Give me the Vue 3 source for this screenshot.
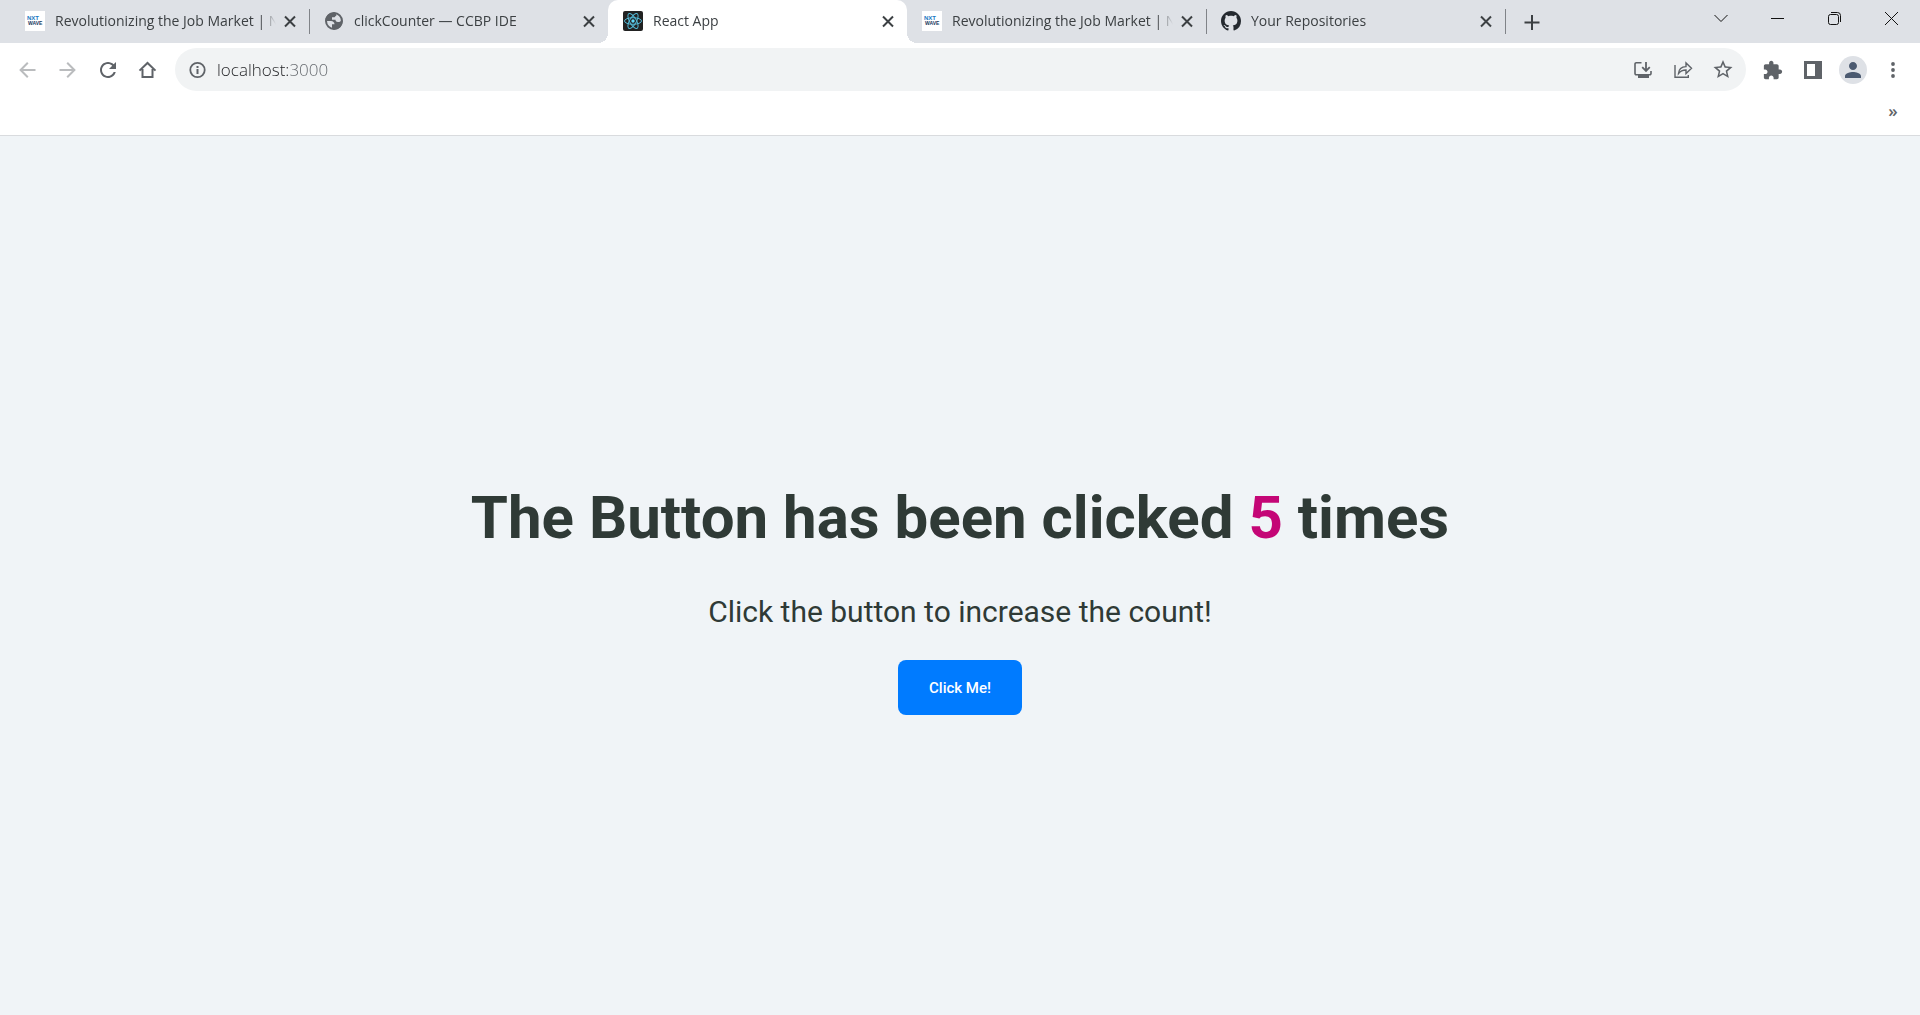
<script setup>
import { ref } from 'vue'

const tabs = [
  { id: 1, title: 'Revolutionizing the Job Market | N', icon: 'nxt' },
  { id: 2, title: 'clickCounter — CCBP IDE', icon: 'globe' },
  { id: 3, title: 'React App', icon: 'react', active: true },
  { id: 4, title: 'Revolutionizing the Job Market | N', icon: 'nxt' },
  { id: 5, title: 'Your Repositories', icon: 'github' }
]

const address = ref('localhost:3000')
const count = ref(5)
</script>

<template>
  <div class="browser">
    <header class="chrome">
      <div class="strip">
        <div v-for="tab in tabs" :key="tab.id" class="tab" :class="{ active: tab.active }">
          <svg v-if="tab.icon === 'nxt'" class="favicon" viewBox="0 0 20 20">
            <rect width="20" height="20" fill="#fff" />
            <text class="nxt" x="2" y="9" fill="#1a78c2">NXT</text>
            <text class="wave" x="3" y="14" fill="#17375e">WAVE</text>
          </svg>
          <svg v-else-if="tab.icon === 'globe'" class="favicon" viewBox="0 0 20 20">
            <circle cx="10" cy="10" r="8" fill="#dee1e6" stroke="#5f6368" stroke-width="2" />
            <path fill="#5f6368" d="M10 1.5C5 1.500 1.500 5 1.500 10h5.500c2 0 3.500 1.500 3.500 3.200H8v3.500l2 1.800c5 0 8.500-3.500 8.500-8.500l-1.500-.8c-.5 1.500-1.500 1.800-3 1.800-2 0-2.500-1.200-2.500-2.200H8V6.200h2.500c.5 0 .8-1.200 1.800-1.500V2z" />
          </svg>
          <svg v-else-if="tab.icon === 'react'" class="favicon" viewBox="0 0 20 20">
            <rect width="20" height="20" rx="2" fill="#222" />
            <g fill="none" stroke="#53b9d6" stroke-width="1">
              <ellipse cx="10" cy="10" rx="8.500" ry="3.300" />
              <ellipse cx="10" cy="10" rx="8.500" ry="3.300" transform="rotate(60 10 10)" />
              <ellipse cx="10" cy="10" rx="8.500" ry="3.300" transform="rotate(120 10 10)" />
            </g>
            <circle cx="10" cy="10" r="1.700" fill="#61dafb" />
          </svg>
          <svg v-else class="favicon" viewBox="0 0 16 16">
            <path fill="#24292f" d="M8 0C3.58 0 0 3.58 0 8c0 3.54 2.29 6.53 5.47 7.59.4.07.55-.17.55-.38 0-.19-.01-.82-.01-1.49-2.01.37-2.53-.49-2.69-.94-.09-.23-.48-.94-.82-1.13-.28-.15-.68-.52-.01-.53.63-.01 1.08.58 1.23.82.72 1.21 1.87.87 2.33.66.07-.52.28-.87.51-1.07-1.78-.2-3.64-.89-3.64-3.95 0-.87.31-1.59.82-2.15-.08-.2-.36-1.02.08-2.12 0 0 .67-.21 2.2.82.64-.18 1.32-.27 2-.27s1.36.09 2 .27c1.53-1.04 2.2-.82 2.2-.82.44 1.1.16 1.92.08 2.12.51.56.82 1.27.82 2.15 0 3.07-1.87 3.75-3.65 3.95.29.25.54.73.54 1.48 0 1.07-.01 1.93-.01 2.2 0 .21.15.46.55.38A8.01 8.01 0 0 0 16 8c0-4.42-3.58-8-8-8z" />
          </svg>
          <span class="title">{{ tab.title }}</span>
          <button class="close" aria-label="Close tab">
            <svg viewBox="0 0 20 20"><path d="M5 5.500l10 10M15 5.500l-10 10" stroke="#3c4043" stroke-width="2" /></svg>
          </button>
        </div>
        <button class="new-tab" aria-label="New tab">
          <svg viewBox="0 0 20 20"><path d="M10 3v15M2.500 10.500h15" stroke="#3c4043" stroke-width="2" /></svg>
        </button>
        <div class="window-controls">
          <button aria-label="Search tabs"><svg viewBox="0 0 20 20"><path d="M3.500 7l6.500 6.500L16.500 7" /></svg></button>
          <button aria-label="Minimize"><svg viewBox="0 0 20 20"><path d="M3 10.500h13" /></svg></button>
          <button aria-label="Restore">
            <svg viewBox="0 0 20 20">
              <rect x="3.500" y="6.500" width="10" height="10" rx="2" />
              <path d="M6 4.500h6.500a3 3 0 0 1 3 3V14" />
            </svg>
          </button>
          <button aria-label="Close"><svg viewBox="0 0 20 20"><path d="M3 4l13 13M16 4L3 17" /></svg></button>
        </div>
      </div>

      <nav class="toolbar">
        <button class="tool" aria-label="Back">
          <svg viewBox="0 0 20 20" class="faded"><path d="M17.500 10H3M9.800 2.800L2.600 10l7.200 7.200" /></svg>
        </button>
        <button class="tool" aria-label="Forward">
          <svg viewBox="0 0 20 20" class="faded"><path d="M1.500 10H16M9.200 2.800l7.200 7.200-7.200 7.200" /></svg>
        </button>
        <button class="tool" aria-label="Reload">
          <svg class="large" viewBox="0 0 24 24"><path fill="#5f6368" d="M17.65 6.35C16.2 4.9 14.21 4 12 4c-4.42 0-7.99 3.58-7.99 8s3.57 8 7.99 8c3.73 0 6.84-2.550 7.73-6h-2.080c-.82 2.330-3.040 4-5.650 4-3.310 0-6-2.690-6-6s2.690-6 6-6c1.660 0 3.140.690 4.220 1.780L13 11h7V4l-2.350 2.350z" /></svg>
        </button>
        <button class="tool" aria-label="Home">
          <svg class="large" viewBox="0 0 24 24"><path d="M3.500 12.600L11.500 5l8 7.600M6.500 11v8h10v-8" fill="none" stroke="#5f6368" stroke-width="2" /></svg>
        </button>

        <div class="omnibox">
          <svg class="info" viewBox="0 0 20 20">
            <circle cx="10.500" cy="10" r="7.200" fill="none" stroke="#5f6368" stroke-width="1.800" />
            <path d="M10.500 9v5M10.500 6v2" stroke="#5f6368" stroke-width="2" />
          </svg>
          <input v-model="address" class="address" type="text" aria-label="Address" spellcheck="false" />
          <button class="tool" aria-label="Install app">
            <svg viewBox="0 0 20 20" fill="none" stroke="#5f6368" stroke-width="1.600">
              <path d="M8.500 2.800H3.200a1.200 1.200 0 0 0-1.200 1.200v9.500a1.200 1.200 0 0 0 1.200 1.200h13.600a1.200 1.200 0 0 0 1.200-1.200V11" />
              <path d="M13 2v8.500M9.200 7.200L13 11l3.800-3.800" stroke-width="1.800" />
              <path d="M5 16.500h11" stroke-width="3" />
            </svg>
          </button>
          <button class="tool" aria-label="Share">
            <svg viewBox="0 0 20 20" fill="none" stroke="#5f6368" stroke-width="1.400">
              <path d="M2 5v12.300h13.300V15" />
              <path d="M5.500 13.500c.3-4 3-6.700 7.500-6.900V3l5.500 5.300-5.500 5.200V10c-3.500 0-5.500.8-7.500 3.500z" />
            </svg>
          </button>
          <button class="tool" aria-label="Bookmark this tab">
            <svg viewBox="1.500 2 21 21"><path fill="#5f6368" d="M22 9.240l-7.190-.620L12 2 9.190 8.630 2 9.240l5.460 4.730L5.820 21 12 17.270 18.180 21l-1.630-7.030L22 9.240zM12 15.400l-3.760 2.270 1-4.280-3.320-2.880 4.380-.380L12 6.100l1.710 4.040 4.380.380-3.320 2.880 1 4.280L12 15.400z" /></svg>
          </button>
        </div>

        <button class="tool" aria-label="Extensions">
          <svg viewBox="1 0 23 23"><path fill="#5f6368" d="M20.500 11H19V7c0-1.100-.9-2-2-2h-4V3.500C13 2.120 11.880 1 10.500 1S8 2.120 8 3.500V5H4c-1.100 0-1.990.9-1.990 2v3.800H3.500c1.490 0 2.700 1.210 2.700 2.700s-1.210 2.700-2.700 2.700H2V20c0 1.100.9 2 2 2h3.800v-1.500c0-1.490 1.210-2.700 2.700-2.700 1.490 0 2.700 1.210 2.700 2.700V22H17c1.100 0 2-.9 2-2v-4h1.500c1.380 0 2.500-1.120 2.500-2.500S21.880 11 20.500 11z" /></svg>
        </button>
        <button class="tool" aria-label="Side panel">
          <svg viewBox="0 0 20 20"><path fill="#5f6368" fill-rule="evenodd" d="M1 1h18v18H1zM4 4v12h8V4z" /></svg>
        </button>
        <button class="tool" aria-label="Profile">
          <span class="avatar">
            <svg viewBox="2 2 20 20"><path fill="#4b5a70" d="M12 12c2.210 0 4-1.790 4-4s-1.790-4-4-4-4 1.790-4 4 1.790 4 4 4zm0 2c-2.670 0-8 1.340-8 4v2h16v-2c0-2.660-5.330-4-8-4z" /></svg>
          </span>
        </button>
        <button class="tool" aria-label="Menu">
          <svg viewBox="0 0 20 20" fill="#5f6368"><circle cx="10" cy="4" r="1.900" /><circle cx="10" cy="10" r="1.900" /><circle cx="10" cy="16" r="1.900" /></svg>
        </button>
      </nav>

      <div class="bookmarks">
        <button class="tool more" aria-label="More bookmarks">»</button>
      </div>
    </header>

    <main class="page">
      <h1>The Button has been clicked <span class="count">{{ count }}</span> times</h1>
      <p>Click the button to increase the count!</p>
      <button class="increase" @click="count++">Click Me!</button>
    </main>
  </div>
</template>

<style>
body {
  margin: 0;
}
</style>

<style scoped>
.browser {
  display: flex;
  flex-direction: column;
  min-height: 100vh;
  background: #f0f4f7;
  font-family: "Open Sans", "Noto Sans", sans-serif;
}

button {
  padding: 0;
  border: 0;
  background: none;
  font-family: inherit;
}

svg {
  display: block;
  flex: none;
  width: 20px;
  height: 20px;
}

.chrome {
  background: #fff;
  border-bottom: 1px solid #d9dbde;
}

.strip {
  display: flex;
  height: 43px;
  padding-left: 10px;
  background: #dee1e6;
}

.tab {
  position: relative;
  display: flex;
  flex: 0 1 299px;
  align-items: center;
  box-sizing: border-box;
  min-width: 0;
  padding: 0 9px 2px 15px;
}

.tab:not(.active):not(:has(+ .active))::after {
  content: "";
  position: absolute;
  top: 9px;
  right: -1px;
  width: 1px;
  height: 25px;
  background: #808388;
}

.tab.active {
  background: #fff;
  border-radius: 10px 10px 0 0;
}

.tab.active::before,
.tab.active::after {
  content: "";
  position: absolute;
  bottom: 0;
  width: 10px;
  height: 10px;
}

.tab.active::before {
  right: 100%;
  background: radial-gradient(circle at 0 0, transparent 10px, #fff 10px);
}

.tab.active::after {
  left: 100%;
  background: radial-gradient(circle at 100% 0, transparent 10px, #fff 10px);
}

.nxt {
  font: bold 6px "Liberation Sans", sans-serif;
}

.wave {
  font: bold 5px "Liberation Sans", sans-serif;
}

.title {
  flex: 1;
  min-width: 0;
  margin-left: 10px;
  overflow: hidden;
  color: #3c4043;
  font-size: 14px;
  line-height: 20px;
  white-space: nowrap;
  mask-image: linear-gradient(to left, transparent 4px, #000 20px);
}

.new-tab {
  width: 54px;
}

.new-tab svg {
  margin: 0 auto;
}

.window-controls {
  display: flex;
  height: 36px;
  margin-left: auto;
}

.window-controls button {
  display: grid;
  place-items: center;
  width: 57px;
}

.window-controls svg {
  fill: none;
  stroke: #111;
  stroke-width: 1;
}

.toolbar {
  display: flex;
  padding: 5px 7px 0 8px;
}

.tool {
  display: grid;
  flex: none;
  place-items: center;
  width: 40px;
  height: 43px;
}

.faded {
  fill: none;
  stroke: #babcbe;
  stroke-width: 2;
}

.large {
  width: 24px;
  height: 24px;
}

.omnibox {
  display: flex;
  flex: 1;
  align-items: center;
  min-width: 0;
  margin: 0 7px;
  padding: 0 3px 0 12px;
  border-radius: 22px;
  background: #f1f3f4;
}

.address {
  flex: 1;
  min-width: 0;
  margin-left: 10px;
  padding: 0;
  border: 0;
  outline: 0;
  background: linear-gradient(to right, #202124 73px, #5f6368 73px);
  background-clip: text;
  color: #202124;
  -webkit-text-fill-color: transparent;
  font-family: inherit;
  font-size: 17px;
  font-weight: 300;
  line-height: 24px;
}

.avatar {
  display: grid;
  place-items: center;
  width: 28px;
  height: 28px;
  border-radius: 50%;
  background: #dee1e6;
}

.bookmarks {
  display: flex;
  justify-content: flex-end;
  height: 44px;
  padding: 0 7px;
}

.more {
  height: 40px;
  color: #5f6368;
  font-size: 17px;
  font-weight: 600;
  line-height: 24px;
}

.page {
  display: flex;
  flex: 1;
  flex-direction: column;
  align-items: center;
  justify-content: center;
  padding-top: 47px;
  color: #2f3a36;
  font-family: Roboto, sans-serif;
  text-align: center;
}

h1 {
  margin: 0 0 41px;
  font-size: 60px;
  font-weight: 700;
  line-height: 70px;
}

.count {
  color: #c40676;
}

p {
  margin: 0 0 30px;
  font-size: 30px;
  line-height: 36px;
}

.increase {
  padding: 1px 31px 0;
  border-radius: 8px;
  background: #007bff;
  color: #fff;
  font-size: 15px;
  font-weight: 500;
  line-height: 54px;
}
</style>
